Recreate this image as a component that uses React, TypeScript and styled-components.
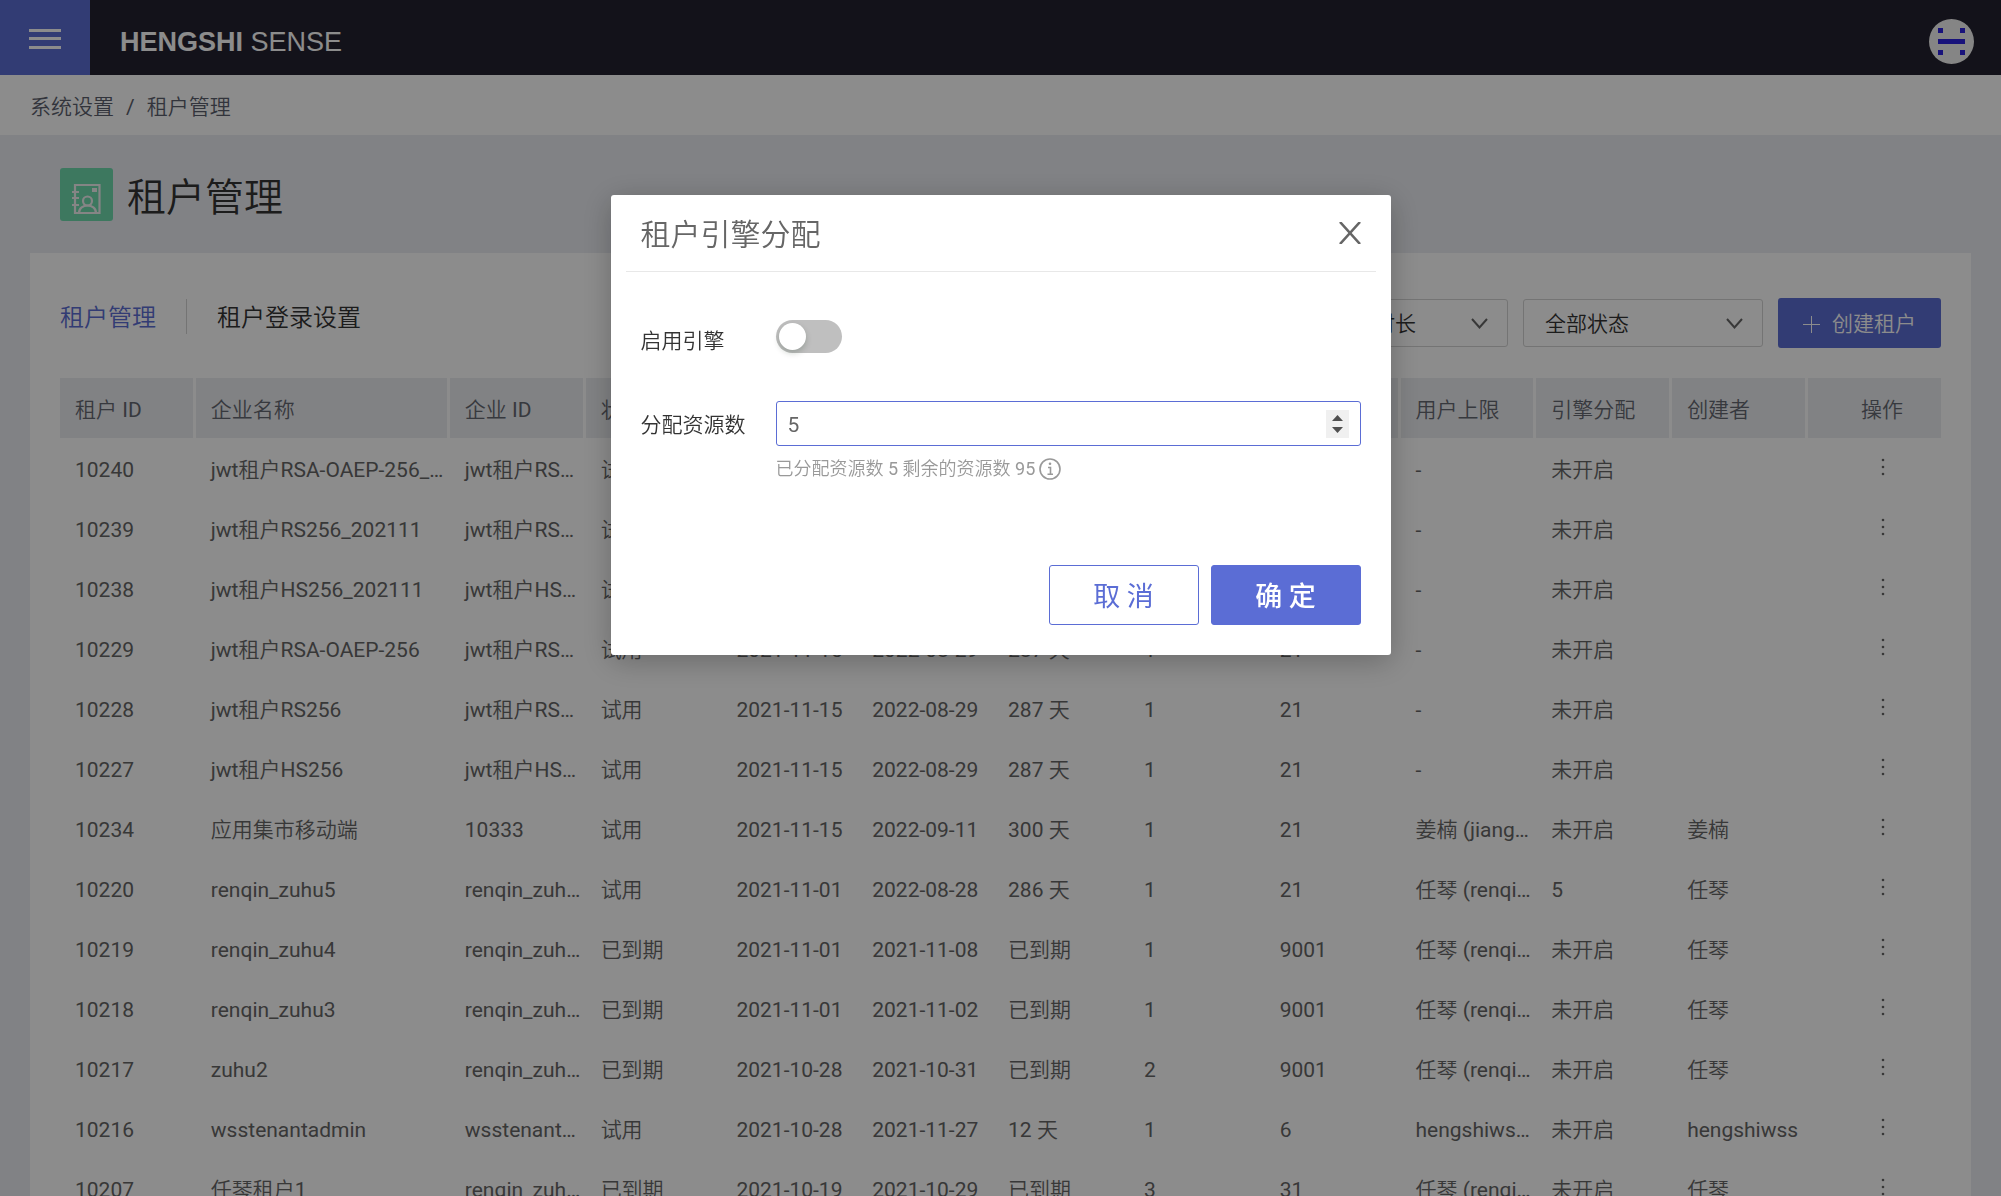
import React, { useState } from "react";
import styled, { createGlobalStyle } from "styled-components";

const GlobalStyle = createGlobalStyle`
  * { box-sizing: border-box; }
  body { margin: 0; overflow: hidden; }
  body, button, input, select {
    font-family: Roboto, "Noto Sans CJK SC DemiLight", "Noto Sans CJK SC", sans-serif;
    font-size: 21px;
    line-height: 30px;
    color: #666;
  }
  button { padding: 0; border: 0; background: none; cursor: pointer; }
`;

const Page = styled.div`
  display: flex;
  flex-direction: column;
  height: 100vh;
  overflow: hidden;
  background: #ebedf2;
`;

const TopBar = styled.header`
  display: flex;
  flex: none;
  height: 75px;
  background: #242230;
`;

const MenuButton = styled.button`
  display: flex;
  align-items: center;
  justify-content: center;
  width: 90px;
  height: 75px;
  padding-top: 3px;
  background: #5b6dd3;
`;

const TopBarContent = styled.div`
  display: flex;
  flex: 1;
  align-items: center;
  justify-content: space-between;
  padding: 8px 27px 0 30px;
`;

const Brand = styled.div`
  font-family: "Liberation Sans", Arial, sans-serif;
  font-size: 27px;
  color: #fff;
`;

const AvatarButton = styled.button`
  display: flex;
  width: 45px;
  height: 45px;
`;

const Breadcrumb = styled.nav`
  display: flex;
  flex: none;
  align-items: center;
  gap: 12px;
  height: 60px;
  padding: 3px 30px 0;
  background: #fff;
  color: #5c5f6e;
`;

const CrumbLink = styled.a`
  color: inherit;
  text-decoration: none;
`;

const Heading = styled.div`
  display: flex;
  flex: none;
  align-items: center;
  gap: 14px;
  height: 118px;
  padding: 0 60px;
`;

const HeadingIcon = styled.span`
  display: flex;
  width: 53px;
  height: 53px;
  border-radius: 3px;
  background: #6fdaae;
`;

const Title = styled.h1`
  margin: 0;
  padding-top: 7px;
  font-size: 39px;
  font-weight: 400;
  line-height: 54px;
  color: #333;
`;

const Card = styled.main`
  flex: 1;
  min-height: 0;
  margin: 0 30px;
  padding: 45px 30px 0;
  overflow: hidden;
  background: #fff;
`;

const Toolbar = styled.div`
  display: flex;
  align-items: center;
  justify-content: space-between;
  height: 50px;
  margin-bottom: 30px;
`;

const Tabs = styled.div`
  display: flex;
  align-items: center;
  height: 32px;
  margin-bottom: 14px;
`;

const Tab = styled.button<{ $active?: boolean }>`
  padding-top: 3px;
  font-size: 24px;
  line-height: 32px;
  color: ${(p) => (p.$active ? "#5b6dd3" : "#333")};

  & + & {
    margin-left: 30px;
    padding-left: 30px;
    border-left: 1px solid #d4d4d4;
  }
`;

const Filters = styled.div`
  display: flex;
  align-items: center;
  gap: 15px;
`;

const SelectBox = styled.label`
  display: grid;
  grid-template-columns: 1fr 36px;
  align-items: center;
  width: 240px;
  height: 48px;
  border: 1px solid #d4d4d4;
  border-radius: 3px;

  select {
    grid-area: 1 / 1 / 2 / 3;
    width: 100%;
    height: 46px;
    padding: 2px 36px 0 21px;
    border: 0;
    background: none;
    color: #333;
    appearance: none;
  }

  svg {
    grid-area: 1 / 2;
    pointer-events: none;
  }
`;

const CreateButton = styled.button`
  display: flex;
  align-items: center;
  justify-content: center;
  gap: 12px;
  width: 163px;
  height: 50px;
  padding-top: 2px;
  border-radius: 3px;
  background: #5b6dd3;
  color: #fff;
`;

const Table = styled.table`
  width: 100%;
  border-collapse: separate;
  border-spacing: 0;
  table-layout: fixed;

  th, td {
    height: 60px;
    padding: 3px 0 0 15px;
    overflow: hidden;
    text-align: left;
    text-overflow: ellipsis;
    white-space: nowrap;
    font-weight: 400;
  }

  th {
    border-right: 3px solid #fff;
    background: #ebedf0;
    color: #656872;
  }

  td { border-right: 3px solid transparent; }

  th:last-child, td:last-child {
    border-right: 0;
    text-align: center;
  }
`;

const FixedCol = styled.col<{ $width: number }>`
  width: ${(p) => p.$width}px;
`;

const MoreButton = styled.button`
  display: block;
  width: 24px;
  height: 28px;
  margin: 0 auto;
`;

const Overlay = styled.div`
  position: fixed;
  inset: 0;
  display: flex;
  align-items: flex-start;
  justify-content: center;
  padding-top: 195px;
  background: rgba(0, 0, 0, 0.45);
`;

const Dialog = styled.section`
  width: 780px;
  padding: 0 15px 30px;
  border-radius: 3px;
  background: #fff;
  box-shadow: 0 6px 30px rgba(0, 0, 0, 0.25);
`;

const DialogHeader = styled.header`
  display: flex;
  align-items: center;
  justify-content: space-between;
  height: 77px;
  padding: 0 15px;
  border-bottom: 1px solid #e8e8e8;
`;

const DialogTitle = styled.h2`
  margin: 0;
  padding-top: 4px;
  font-size: 30px;
  font-weight: 400;
  line-height: 42px;
`;

const CloseButton = styled.button`
  display: flex;
  width: 22px;
  height: 22px;
`;

const Form = styled.div`
  display: grid;
  grid-template-columns: 135px 1fr;
  padding: 48px 15px 0;
`;

const FormLabel = styled.label<{ $lineHeight: number }>`
  line-height: ${(p) => p.$lineHeight}px;
  color: #333;
`;

const SwitchCell = styled.div`
  height: 81px;
`;

const Switch = styled.input`
  display: block;
  width: 66px;
  height: 33px;
  margin: 0;
  padding: 3px;
  border-radius: 33px;
  background: #bfbfbf;
  appearance: none;
  cursor: pointer;

  &::before {
    content: "";
    display: block;
    width: 27px;
    height: 27px;
    border-radius: 50%;
    background: #fff;
    box-shadow: 0 3px 6px rgba(0, 35, 11, 0.2);
  }

  &:checked { background: #5b6dd3; }
  &:checked::before { margin-left: 33px; }
`;

const NumberBox = styled.div`
  display: flex;
  align-items: center;
  height: 45px;
  padding: 0 11px;
  border: 1px solid #5b6dd5;
  border-radius: 3px;

  input {
    flex: 1;
    min-width: 0;
    height: 40px;
    padding: 2px 0 0;
    border: 0;
    outline: 0;
    background: none;
    appearance: textfield;
  }

  input::-webkit-inner-spin-button { display: none; }
`;

const Stepper = styled.div`
  display: flex;
  flex-direction: column;
  width: 23px;
  height: 28px;
  background: #f0f0f0;
`;

const StepButton = styled.button<{ $up?: boolean }>`
  display: flex;
  flex: 1;
  align-items: ${(p) => (p.$up ? "flex-end" : "flex-start")};
  justify-content: center;
  padding: 3px 0;
`;

const Hint = styled.p`
  display: flex;
  align-items: center;
  gap: 4px;
  margin: 8px 0 0;
  font-size: 18px;
  line-height: 30px;
  color: #999;
`;

const DialogFooter = styled.footer`
  display: flex;
  justify-content: flex-end;
  gap: 12px;
  padding: 81px 15px 0;
`;

const ActionButton = styled.button<{ $primary?: boolean }>`
  width: 150px;
  height: 60px;
  padding-top: 4px;
  border: 1px solid #5b6dd5;
  border-radius: 3px;
  background: ${(p) => (p.$primary ? "#5b6dd5" : "#fff")};
  font-family: Roboto, "Noto Sans CJK SC", sans-serif;
  font-size: 27px;
  font-weight: ${(p) => (p.$primary ? 500 : 400)};
  color: ${(p) => (p.$primary ? "#fff" : "#5b6dd5")};
`;

const headers = [
  "租户 ID", "企业名称", "企业 ID", "状态", "开始时间", "结束时间", "剩余时长",
  "用户数", "数据上限", "用户上限", "引擎分配", "创建者", "操作",
];

const jwtDates = ["试用", "2021-11-15", "2022-08-29", "287 天", "1", "21", "-", "未开启", ""];

const rows: string[][] = [
  ["10240", "jwt租户RSA-OAEP-256_202111", "jwt租户RSA-OAEP", ...jwtDates],
  ["10239", "jwt租户RS256_202111", "jwt租户RS256", ...jwtDates],
  ["10238", "jwt租户HS256_202111", "jwt租户HS256", ...jwtDates],
  ["10229", "jwt租户RSA-OAEP-256", "jwt租户RSA-OAEP", ...jwtDates],
  ["10228", "jwt租户RS256", "jwt租户RS256", ...jwtDates],
  ["10227", "jwt租户HS256", "jwt租户HS256", ...jwtDates],
  ["10234", "应用集市移动端", "10333", "试用", "2021-11-15", "2022-09-11", "300 天", "1", "21", "姜楠 (jiangnan)", "未开启", "姜楠"],
  ["10220", "renqin_zuhu5", "renqin_zuhu5", "试用", "2021-11-01", "2022-08-28", "286 天", "1", "21", "任琴 (renqin)", "5", "任琴"],
  ["10219", "renqin_zuhu4", "renqin_zuhu4", "已到期", "2021-11-01", "2021-11-08", "已到期", "1", "9001", "任琴 (renqin)", "未开启", "任琴"],
  ["10218", "renqin_zuhu3", "renqin_zuhu3", "已到期", "2021-11-01", "2021-11-02", "已到期", "1", "9001", "任琴 (renqin)", "未开启", "任琴"],
  ["10217", "zuhu2", "renqin_zuhu2", "已到期", "2021-10-28", "2021-10-31", "已到期", "2", "9001", "任琴 (renqin)", "未开启", "任琴"],
  ["10216", "wsstenantadmin", "wsstenantadmin", "试用", "2021-10-28", "2021-11-27", "12 天", "1", "6", "hengshiwss (hengshiwss)", "未开启", "hengshiwss"],
  ["10207", "任琴租户1", "renqin_zuhu1", "已到期", "2021-10-19", "2021-10-29", "已到期", "3", "31", "任琴 (renqin)", "未开启", "任琴"],
];

const Chevron = () => (
  <svg width="17" height="11" viewBox="0 0 17 11" fill="none" stroke="#666" strokeWidth="2">
    <path d="M1 1l7.500 8.500L16 1" />
  </svg>
);

const FilterSelect = ({ label, value }: { label: string; value: string }) => (
  <SelectBox>
    <select aria-label={label} defaultValue={value}>
      <option>{value}</option>
    </select>
    <Chevron />
  </SelectBox>
);

const ContactIcon = () => (
  <svg width="53" height="53" viewBox="0 0 53 53" fill="none" stroke="#f2f2f2" strokeWidth="2.200">
    <path d="M15 17h24.500v28H15z" />
    <path d="M12 24h7M12 30h7M12 37h7" />
    <path d="M32 20h5v4h-5z" fill="#f2f2f2" stroke="none" />
    <circle cx="27.500" cy="33" r="4.500" />
    <path d="M19 45c0-10 17-10 17 0" />
  </svg>
);

export default function App() {
  const [count, setCount] = useState(5);

  return (
    <>
      <GlobalStyle />
      <Page>
        <TopBar>
          <MenuButton aria-label="菜单">
            <svg width="32" height="20" viewBox="0 0 32 20" fill="#fff">
              <path d="M0 0h32v3H0zM0 8h32v3H0zM0 17h32v3H0z" />
            </svg>
          </MenuButton>
          <TopBarContent>
            <Brand><b>HENGSHI</b> SENSE</Brand>
            <AvatarButton aria-label="账户">
              <svg width="45" height="45" viewBox="0 0 45 45" fill="#2d22e0">
                <circle cx="22.500" cy="22.500" r="22.500" fill="#f3f3f3" />
                <path d="M9 20h27v5H9zM9 9h5v5H9zM31 9h5v5h-5zM9 31h5v5H9zM31 31h5v5h-5z" />
              </svg>
            </AvatarButton>
          </TopBarContent>
        </TopBar>
        <Breadcrumb>
          <CrumbLink href="#settings">系统设置</CrumbLink>
          <span>/</span>
          <span>租户管理</span>
        </Breadcrumb>
        <Heading>
          <HeadingIcon><ContactIcon /></HeadingIcon>
          <Title>租户管理</Title>
        </Heading>
        <Card>
          <Toolbar>
            <Tabs>
              <Tab $active>租户管理</Tab>
              <Tab>租户登录设置</Tab>
            </Tabs>
            <Filters>
              <FilterSelect label="剩余时长" value="全部剩余时长" />
              <FilterSelect label="状态" value="全部状态" />
              <CreateButton>
                <svg width="17" height="17" viewBox="0 0 17 17" stroke="#fff">
                  <path d="M8.500 0v17M0 8.500h17" />
                </svg>
                创建租户
              </CreateButton>
            </Filters>
          </Toolbar>
          <Table>
            <colgroup>
              <col />
              <FixedCol $width={254} />
              {headers.slice(2, -1).map((h) => <col key={h} />)}
              <FixedCol $width={133} />
            </colgroup>
            <thead>
              <tr>{headers.map((h) => <th key={h} scope="col">{h}</th>)}</tr>
            </thead>
            <tbody>
              {rows.map((row) => (
                <tr key={row[0]}>
                  {row.map((cell, i) => <td key={headers[i]}>{cell}</td>)}
                  <td>
                    <MoreButton aria-label="更多操作">
                      <svg width="24" height="20" viewBox="0 0 24 20" fill="#666">
                        <circle cx="13" cy="2" r="1.300" />
                        <circle cx="13" cy="9" r="1.300" />
                        <circle cx="13" cy="16" r="1.300" />
                      </svg>
                    </MoreButton>
                  </td>
                </tr>
              ))}
            </tbody>
          </Table>
        </Card>
      </Page>
      <Overlay>
        <Dialog role="dialog" aria-modal="true" aria-labelledby="dialog-title">
          <DialogHeader>
            <DialogTitle id="dialog-title">租户引擎分配</DialogTitle>
            <CloseButton aria-label="关闭">
              <svg width="22" height="22" viewBox="0 0 22 22" stroke="#666" strokeWidth="2.600">
                <path d="M1 0l20 22M21 0L1 22" />
              </svg>
            </CloseButton>
          </DialogHeader>
          <Form>
            <FormLabel htmlFor="engine" $lineHeight={42}>启用引擎</FormLabel>
            <SwitchCell>
              <Switch id="engine" type="checkbox" role="switch" />
            </SwitchCell>
            <FormLabel htmlFor="resources" $lineHeight={48}>分配资源数</FormLabel>
            <div>
              <NumberBox>
                <input
                  id="resources"
                  type="number"
                  value={count}
                  onChange={(e) => setCount(Number(e.target.value))}
                />
                <Stepper>
                  <StepButton $up aria-label="增加" onClick={() => setCount(count + 1)}>
                    <svg width="11" height="6" viewBox="0 0 11 6" fill="#505050"><path d="M0 6L5.500 0L11 6z" /></svg>
                  </StepButton>
                  <StepButton aria-label="减少" onClick={() => setCount(count - 1)}>
                    <svg width="11" height="6" viewBox="0 0 11 6" fill="#505050"><path d="M0 0h11L5.500 6z" /></svg>
                  </StepButton>
                </Stepper>
              </NumberBox>
              <Hint>
                <span>已分配资源数 5 剩余的资源数 95</span>
                <svg width="22" height="22" viewBox="0 0 22 22" fill="none" stroke="#999" strokeWidth="1.600">
                  <circle cx="11" cy="11" r="10" />
                  <path d="M9 9.500h2.500v6.500M8.500 16.200h5.500" />
                  <circle cx="11" cy="5.800" r="1.300" fill="#999" stroke="none" />
                </svg>
              </Hint>
            </div>
          </Form>
          <DialogFooter>
            <ActionButton>取 消</ActionButton>
            <ActionButton $primary>确 定</ActionButton>
          </DialogFooter>
        </Dialog>
      </Overlay>
    </>
  );
}
